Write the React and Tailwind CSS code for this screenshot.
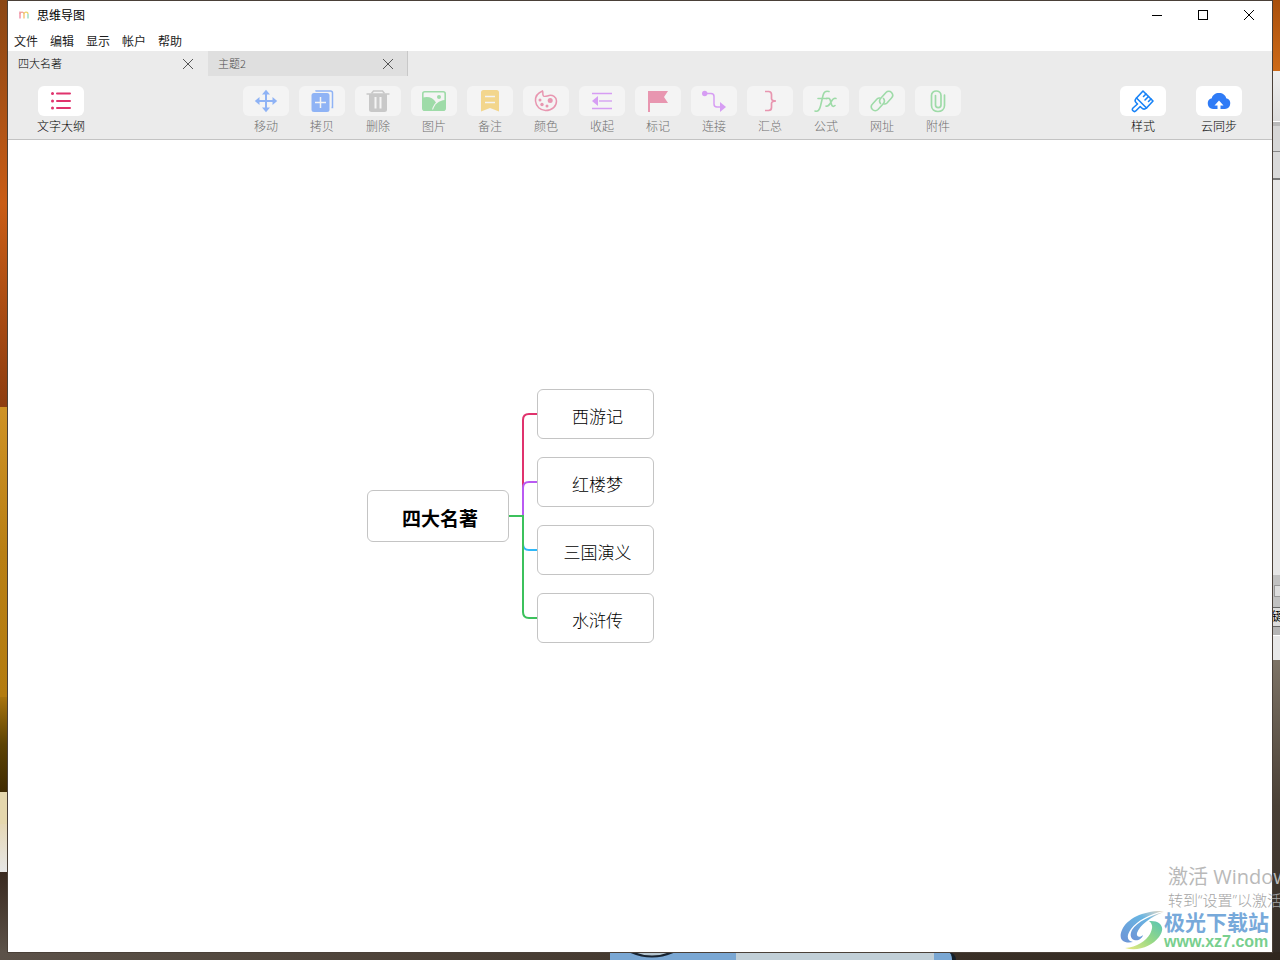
import React from "react";

const icons = {
  outline: (
    <g stroke="#e0336d" strokeWidth="2" strokeLinecap="round">
      <path d="M8 4.500h13M8 12h13M8 19h13" />
      <path d="M3.500 4.500h.01M3.500 12h.01M3.500 19h.01" strokeWidth="3" />
    </g>
  ),
  move: (
    <g fill="#8fb3f5">
      <path d="M11 5h2v6h6v2h-6v6h-2v-6H5v-2h6z" />
      <path d="M12 .8 16 5.500H8zM12 23.200 8 18.500h8zM.8 12 5.500 8v8zM23.200 12 18.500 16V8z" />
    </g>
  ),
  copy: (
    <g>
      <path d="M6 2.500V2h14.500a2 2 0 0 1 2 2v14.500h-1" stroke="#8fb3f5" strokeWidth="1.500" />
      <rect x="1.500" y="4" width="18" height="19" rx="2.500" fill="#8fb3f5" />
      <path d="M10.500 8v11M5 13.500h11" stroke="#f4f4f4" strokeWidth="1.500" />
    </g>
  ),
  trash: (
    <g>
      <path d="M5.500 4.500 7.500 2h9l2 2.500" stroke="#c8c8c8" strokeWidth="1.500" />
      <path d="M.5 5h23" stroke="#c8c8c8" strokeWidth="1.500" />
      <path d="M3 5h18v15.500a2.500 2.500 0 0 1-2.500 2.500h-13A2.500 2.500 0 0 1 3 20.500z" fill="#c8c8c8" />
      <path d="M9.500 8v11.500M14.500 8v11.500" stroke="#f4f4f4" strokeWidth="2" />
    </g>
  ),
  image: (
    <g>
      <rect x=".8" y="2.800" width="22.400" height="18.400" rx="2" stroke="#9edba8" strokeWidth="1.600" />
      <path d="M1 8.500c5-1.500 10 0 13 5-2 2-3.500 4.500-4 7.500H2.500A1.500 1.500 0 0 1 1 19.500z" fill="#9edba8" />
      <path d="M23 11c-6 .5-10.500 4-12 10h10.500a1.500 1.500 0 0 0 1.500-1.500z" fill="#9edba8" />
      <circle cx="17" cy="8" r="2" fill="#9edba8" />
    </g>
  ),
  note: (
    <g>
      <path d="M3 3.500A2.500 2.500 0 0 1 5.500 1h13A2.500 2.500 0 0 1 21 3.500v19L12 19l-9 3.500z" fill="#f3d68d" />
      <path d="M7 7.500h10M7 13.500h10" stroke="#f4f4f4" strokeWidth="1.600" />
    </g>
  ),
  palette: (
    <g stroke="#e896b0" strokeWidth="1.500">
      <path d="M8.500 2c-5 2-7.300 6-7 10 .4 5.500 4.800 9.500 10 9.500 7 0 11-4.500 11-9.500 0-4-4-6.300-7.500-5.500-2.500.6-4.200 1.500-5.500.5C8 5.500 9.500 3 8.500 2z" />
      <g fill="#e896b0" stroke="none">
        <circle cx="16.200" cy="11.500" r="2.500" />
        <circle cx="6" cy="11" r="1.500" />
        <circle cx="8" cy="15.500" r="1.700" />
        <circle cx="13" cy="17" r="1.500" />
      </g>
    </g>
  ),
  collapse: (
    <g>
      <path d="M2 4.500h20M2 19.500h20" stroke="#d69df3" strokeWidth="1.500" />
      <path d="M9 12h13" stroke="#debaf2" strokeWidth="2" />
      <path d="M8 7v10l-6-5z" fill="#d69df3" />
    </g>
  ),
  flag: (
    <g fill="#e896b0">
      <path d="M2 2h2v21H2z" />
      <path d="M4 2h18l-4 6 4 6H4z" />
    </g>
  ),
  connect: (
    <g>
      <circle cx="2.700" cy="4.500" r="2.700" fill="#d69df3" />
      <path d="M3 4.500h6a3 3 0 0 1 3 3V15a3 3 0 0 0 3 3h3" stroke="#d69df3" strokeWidth="1.500" />
      <path d="m18 13 6 5-6 5z" fill="#d69df3" />
    </g>
  ),
  brace: (
    <path d="M7 2.500h3.500a3 3 0 0 1 3 3v4c0 1.500 1.500 2.500 4.500 2.500-3 0-4.500 1-4.500 2.500v4a3 3 0 0 1-3 3H7" stroke="#e896b0" strokeWidth="1.700" />
  ),
  formula: (
    <g stroke="#9edba8" strokeWidth="1.600" strokeLinecap="round">
      <path d="M1 22c3 1 4.500-1 5.500-5L9 6.500C9.800 3 11.500 1.500 15 2.500M4 9.500h9" />
      <path d="M12.500 9.500c2.500-.8 3.500 0 4 2.500l1 3.500c.5 2 2 2.500 3.500 1M22 9.500c-2-.8-3.500.8-5 3.500s-3 5-5 4" />
    </g>
  ),
  link: (
    <g stroke="#9edba8" strokeWidth="1.600" strokeLinecap="round">
      <path d="M10.500 14.500c-1.500-2-1-4 .5-5.500l5-5.500a3.800 3.800 0 0 1 5.500 0c1.500 1.700 1.500 4 0 5.500L17 14c-1 1-2 1.200-3 1" />
      <path d="M13.500 9.500c1.500 2 1 4-.5 5.500l-5 5.500a3.800 3.800 0 0 1-5.500 0c-1.500-1.700-1.500-4 0-5.500L7 10c1-1 2-1.200 3-1" />
    </g>
  ),
  clip: (
    <path d="M18.500 6v10.500c0 8-13 8-13 0v-10c0-6 9.500-6 9.500 0v9.500c0 3.500-5.500 3.500-5.500 0V6.500" stroke="#9edba8" strokeWidth="1.700" strokeLinecap="round" />
  ),
  brush: (
    <g stroke="#1883f7" strokeWidth="1.600" strokeLinejoin="round" strokeLinecap="round">
      <path d="M12 2 22 12l-6.500 7-10-10z" />
      <path d="M5.500 9C4 10.500 3.500 12 5 13.500l1.500 1.500-4.500 4c-1 1-.8 2 0 2.800s2 1 3 0l4.200-4.300 1.300 1.300c1.500 1.500 3.500 1.500 5 .2" />
      <path d="m15 5-2.500 2.500M17.500 7.500 14 11M20 10l-2.500 2.500" />
    </g>
  ),
  cloud: (
    <g>
      <path d="M6 20a5.500 5.500 0 0 1-1.200-10.800C5.500 6 8.300 4 12 4s6.500 2 7.200 5.200A5.500 5.500 0 0 1 18 20z" fill="#2f7bf6" />
      <path d="m12 11.500 4.500 5h-3V20h-3v-3.500h-3z" fill="#fff" />
    </g>
  ),
};

const tools = [
  ["move", "移动"], ["copy", "拷贝"], ["trash", "删除"], ["image", "图片"], ["note", "备注"],
  ["palette", "颜色"], ["collapse", "收起"], ["flag", "标记"], ["connect", "连接"],
  ["brace", "汇总"], ["formula", "公式"], ["link", "网址"], ["clip", "附件"],
];

function Tool({ icon, label, disabled }) {
  return (
    <button
      disabled={disabled}
      className={"flex w-14 flex-col items-center gap-0.5 text-xs leading-4 font-light " + (disabled ? "text-[#6f6f6f]" : "text-black")}
    >
      <span className={"flex h-[30px] w-[46px] items-center justify-center rounded-md " + (disabled ? "bg-[#f4f4f4]" : "bg-white")}>
        <svg viewBox="0 0 24 24" fill="none" className="h-6 w-6" aria-hidden="true">{icons[icon]}</svg>
      </span>
      {label}
    </button>
  );
}

function Cross({ className }) {
  return (
    <svg viewBox="0 0 10 10" className={className} fill="none" stroke="currentColor" aria-hidden="true">
      <path d="m0 0 10 10M10 0 0 10" />
    </svg>
  );
}

function Tab({ title, active }) {
  return (
    <div className={"flex w-[200px] items-center justify-between pl-2.5 text-[11px] font-light " + (active ? "pr-[15px] text-black" : "border-r border-[#c8c8c8] bg-[#dfdfdf] pr-3.5 text-[#4c4c4c]")}>
      <button role="tab" aria-selected={!!active}>{title}</button>
      <button aria-label={"关闭" + title} className="text-[#555]"><Cross className="h-2.5 w-2.5" /></button>
    </div>
  );
}

function Topic({ className, children }) {
  return (
    <div className={"absolute flex items-center justify-center rounded-md border border-[#c4c4c4] bg-white pt-1 pl-1 text-black " + className}>
      {children}
    </div>
  );
}

function Desktop() {
  return (
    <div className="absolute inset-0 flex flex-col justify-between bg-[#3f362f]" aria-hidden="true">
      <div className="flex flex-1 justify-between">
        <div className="flex w-2 flex-col">
          <div className="h-[407px] bg-linear-to-b from-[#8a4614] via-[#c95c15] to-[#8e3d10]" />
          <div className="h-[290px] bg-linear-to-b from-[#cf9225] via-[#b97f14] to-[#b47c10]" />
          <div className="h-[95px] bg-linear-to-b from-[#a8740e] via-[#5d4305] to-[#402b02]" />
          <div className="h-8 bg-[#e5d7ad]" />
          <div className="h-12 bg-linear-to-b from-[#e5d7b5] to-[#e7e7e7]" />
          <div className="flex-1 bg-linear-to-b from-[#39291f] to-[#5c5249]" />
        </div>
        <div className="flex w-2 flex-col">
          <div className="h-[71px] bg-linear-to-b from-[#a9500c] to-[#cd6a18]" />
          <div className="h-[50px] bg-linear-to-b from-[#eee] to-[#dcdcdc]" />
          <div className="h-[5px] border-t border-white bg-[#b9b9b9]" />
          <div className="h-[26px] border-b border-[#888] bg-[#d6d6d6]" />
          <div className="h-[28px] border-b-2 border-[#777] bg-[#d9d9d9]" />
          <div className="h-[395px] bg-[#e6e6e6]" />
          <div className="flex h-8 items-center bg-[#c1c1c1]"><div className="ml-0.5 h-3 w-3 shrink-0 border border-[#999] bg-[#ddd]" /></div>
          <div className="h-[20px] w-2 overflow-hidden border-y border-[#666] bg-[#ddd] text-xs leading-4 whitespace-nowrap text-black">键</div>
          <div className="h-[9px] border-b border-white bg-[#b5b5b5]" />
          <div className="h-6 bg-[#e8e8e8]" />
          <div className="flex-1 bg-linear-to-b from-[#7d7366] via-[#4a4036] to-[#332c26]" />
        </div>
      </div>
      <div className="flex h-2 bg-linear-to-r from-[#5c5249] via-[#44392f] to-[#30271f]">
        <div className="w-[610px]" />
        <div className="w-[126px] bg-[#7aa7d3] pl-5">
          <svg viewBox="0 0 44 8" className="h-2 w-11"><path d="M1 0q21 9 42 0" fill="#b4c5cf" stroke="#182431" strokeWidth="2" /></svg>
        </div>
        <div className="w-[198px] bg-[#c1cfd7]" />
        <div className="w-[22px] rounded-tr-lg border-r-4 border-[#15202a] bg-[#7aa7d3]" />
      </div>
    </div>
  );
}

export default function App() {
  return (
    <div className="relative flex min-h-screen flex-col overflow-hidden px-2 pt-px pb-2 font-['Noto_Sans_CJK_SC',sans-serif]">
      <Desktop />
      <main className="relative flex flex-1 flex-col bg-white outline outline-[#4a4038]">
        <header className="flex h-7 items-center justify-between pl-[11px] text-black">
          <div className="flex items-center gap-2 text-xs">
            <svg viewBox="0 0 10 8" className="h-2 w-2.5" fill="none" strokeWidth="1.200" aria-hidden="true">
              <path d="M1 7.500v-7" stroke="#ec7a98" />
              <path d="M1 3c0-2.500 4-2.500 4 0" stroke="#f0a090" />
              <path d="M5 3v4.500" stroke="#f5b75a" />
              <path d="M5 3c0-2.500 4-2.500 4 0" stroke="#ecd268" />
              <path d="M9 3v4.500" stroke="#86d6b8" />
            </svg>
            <h1>思维导图</h1>
          </div>
          <div className="flex">
            <button aria-label="最小化" className="flex h-7 w-[46px] items-center justify-center"><span className="h-px w-2.5 bg-black" /></button>
            <button aria-label="最大化" className="flex h-7 w-[46px] items-center justify-center"><span className="h-2.5 w-2.5 border border-black" /></button>
            <button aria-label="关闭" className="flex h-7 w-[46px] items-center justify-center"><Cross className="h-2.5 w-2.5" /></button>
          </div>
        </header>
        <nav className="flex h-[22px] items-center gap-3 pt-0.5 pl-1.5 text-xs text-[#1c1c1c]">
          {["文件", "编辑", "显示", "帐户", "帮助"].map((m) => <button key={m}>{m}</button>)}
        </nav>
        <div role="tablist" className="flex h-[25px] bg-[#ebebeb]">
          <Tab title="四大名著" active />
          <Tab title="主题2" />
        </div>
        <div role="toolbar" className="flex h-16 items-start justify-between border-b border-[#c3c3c3] bg-[#ebebeb] px-[25px] pt-2.5">
          <Tool icon="outline" label="文字大纲" />
          <div className="flex">
            {tools.map(([icon, label]) => <Tool key={icon} icon={icon} label={label} disabled />)}
          </div>
          <div className="flex gap-5">
            <Tool icon="brush" label="样式" />
            <Tool icon="cloud" label="云同步" />
          </div>
        </div>
        <section className="relative flex-1" aria-label="导图">
          <svg className="absolute top-[249px] left-[500px] h-[254px] w-[30px]" viewBox="0 0 30 254" fill="none" strokeWidth="2" aria-hidden="true">
            <path d="M15 127V31q0-6 6-6h9" stroke="#e0336d" />
            <path d="M15 127V99q0-6 6-6h9" stroke="#b95af2" />
            <path d="M15 127v28q0 6 6 6h9" stroke="#2fb8f8" />
            <path d="M0 127h15v96q0 6 6 6h9" stroke="#3cc15c" />
          </svg>
          <Topic className="top-[350px] left-[359px] h-[52px] w-[142px] text-[19px] font-bold">四大名著</Topic>
          <Topic className="top-[249px] left-[529px] h-[50px] w-[117px] text-[17px] font-light">西游记</Topic>
          <Topic className="top-[317px] left-[529px] h-[50px] w-[117px] text-[17px] font-light">红楼梦</Topic>
          <Topic className="top-[385px] left-[529px] h-[50px] w-[117px] text-[17px] font-light">三国演义</Topic>
          <Topic className="top-[453px] left-[529px] h-[50px] w-[117px] text-[17px] font-light">水浒传</Topic>
        </section>
      </main>
      <aside className="absolute right-0 bottom-2 w-40 overflow-hidden font-['Open_Sans','Noto_Sans_CJK_SC',sans-serif] whitespace-nowrap">
        <div className="pl-12 text-[#b9b9b9]">
          <p className="text-xl leading-[26px]">激活 Windows</p>
          <p className="text-[15px] leading-5 font-light text-[#a6a6a6]">转到“设置”以激活 Windows。</p>
        </div>
        <div className="flex items-center">
          <svg viewBox="0 0 44 42" className="h-[42px] w-11" aria-hidden="true">
            <defs>
              <linearGradient id="swirlBlue" x1="0" y1="1" x2="1" y2="0">
                <stop stopColor="#6d93d6" /><stop offset=".65" stopColor="#69b5e2" /><stop offset="1" stopColor="#eed9c0" />
              </linearGradient>
              <linearGradient id="swirlGreen" x1="0" y1="1" x2="1" y2="0">
                <stop stopColor="#ecea80" /><stop offset=".5" stopColor="#96d886" /><stop offset="1" stopColor="#58c5b4" />
              </linearGradient>
            </defs>
            <path d="M44 1C25 0 7 8 2 20c-4 9 1 14 11 12-6-1-7-6-2-13C17 11 29 4 44 1z" fill="url(#swirlBlue)" />
            <path d="M44 2C31 5 17 12 12 20c-2 4-2 8 2 10 4 1 8-1 9-5-3 3-7 2-6-2C20 15 30 7 44 2z" fill="url(#swirlBlue)" />
            <path d="M29 11c12-1 17 7 10 16C32 36 18 42 5 38c12-1 21-7 25-14 3-6 3-10-1-13z" fill="url(#swirlGreen)" />
          </svg>
          <div>
            <p className="font-['Noto_Sans_CJK_SC',sans-serif] text-[21px] leading-[22px] font-bold text-[#77a9da]">极光下载站</p>
            <p className="font-['Liberation_Sans',sans-serif] text-base leading-5 font-bold text-[#78cf8e]">www.xz7.com</p>
          </div>
        </div>
      </aside>
    </div>
  );
}
